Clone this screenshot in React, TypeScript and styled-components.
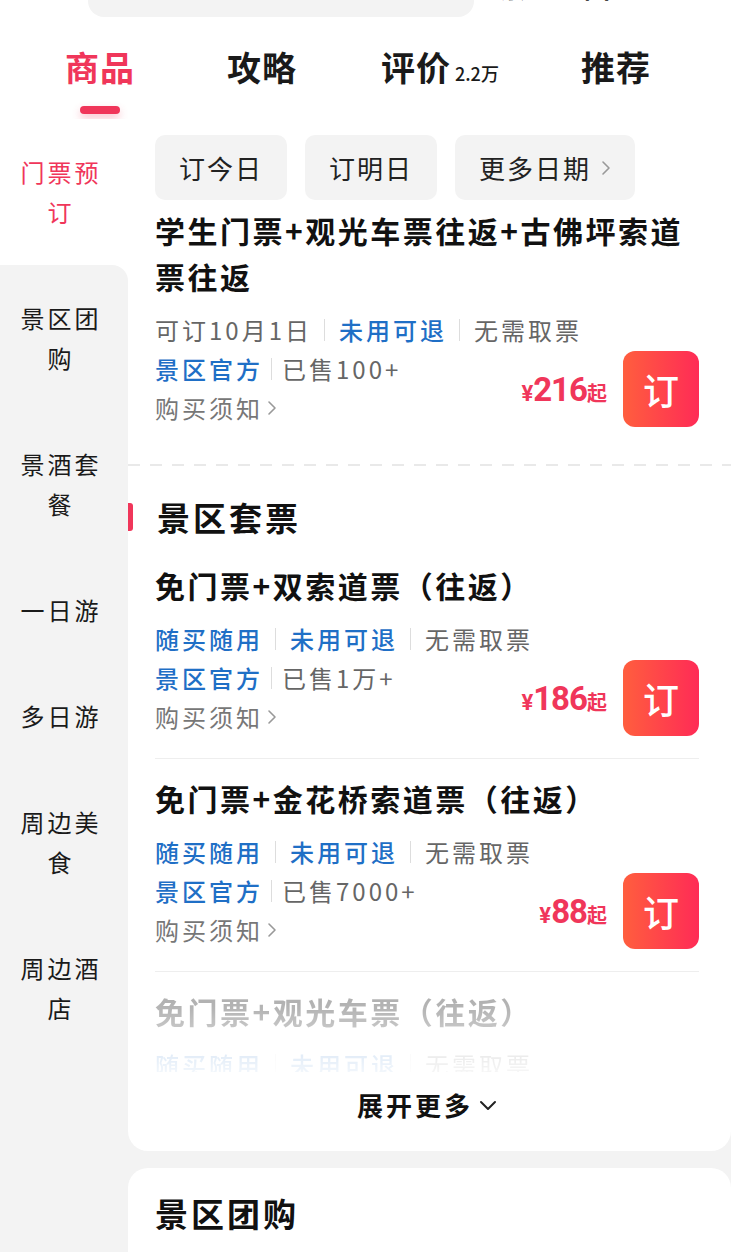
import { Fragment } from 'react';
import styled, { createGlobalStyle } from 'styled-components';

const PINK = '#f0365a';
const BLUE = '#1f6fc6';
const GREY_BG = '#f3f3f3';

const GlobalStyle = createGlobalStyle`
  body {
    margin: 0;
    background: #fff;
    font-family: "Noto Sans CJK SC", "Noto Sans", sans-serif;
    color: #111;
  }
`;

const Page = styled.div`
  width: 731px;
  overflow: hidden;
`;

const TopBar = styled.header`
  height: 119px;
  background: #fff;
`;

const SearchRow = styled.div`
  display: flex;
  align-items: flex-start;
  height: 17px;
  overflow: hidden;
  padding-left: 88px;
`;

const SearchBox = styled.div`
  width: 386px;
  height: 17px;
  border-radius: 0 0 16px 16px;
  background: ${GREY_BG};
`;

const HeadText = styled.span`
  margin: -27px 0 0 26px;
  font-size: 26px;
  line-height: 28px;
  letter-spacing: 2px;
  font-weight: 700;
`;

const Tabs = styled.nav`
  display: grid;
  grid-template-columns: 162px 154px 200px auto;
  justify-items: start;
  padding-left: 65px;
  margin-top: 26px;
`;

const Tab = styled.div<{ $active?: boolean }>`
  display: inline-flex;
  flex-direction: column;
  align-items: center;
  color: ${({ $active }) => ($active ? PINK : '#1a1a1a')};
`;

const TabLabel = styled.div`
  display: flex;
  align-items: baseline;
  font-size: 34px;
  line-height: 48px;
  font-weight: 700;
  letter-spacing: 1px;
`;

const TabCount = styled.span`
  margin-left: 4px;
  font-size: 18px;
  font-weight: 500;
  letter-spacing: 0;
`;

const Indicator = styled.span`
  width: 40px;
  height: 8px;
  margin-top: 15px;
  border-radius: 4px;
  background: ${PINK};
  box-shadow: 0 4px 8px rgba(240, 54, 90, 0.3);
`;

const Body = styled.div`
  display: grid;
  grid-template-columns: 128px minmax(0, 1fr);
  background: ${GREY_BG};
  min-height: 1200px;
`;

const Sidebar = styled.aside`
  display: flex;
  flex-direction: column;
  background: #fff;
`;

const SideItem = styled.div<{ $active?: boolean; $afterActive?: boolean }>`
  padding: 33px 24px 33px 18px;
  font-size: 24px;
  line-height: 40px;
  letter-spacing: 3px;
  text-align: center;
  color: ${({ $active }) => ($active ? PINK : '#1a1a1a')};
  background: ${({ $active }) => ($active ? '#fff' : GREY_BG)};
  border-top-right-radius: ${({ $afterActive }) => ($afterActive ? '16px' : '0')};
`;

const SideFill = styled.div`
  flex: 1;
  background: ${GREY_BG};
`;

const Main = styled.main`
  display: flex;
  flex-direction: column;
  gap: 17px;
  min-width: 0;
`;

const Card = styled.section<{ $top?: boolean }>`
  background: #fff;
  padding: ${({ $top }) => ($top ? '16px 32px 26px 27px' : '21px 32px 60px 27px')};
  border-radius: ${({ $top }) => ($top ? '0 0 20px 20px' : '20px 20px 0 0')};
`;

const Chips = styled.div`
  display: flex;
  gap: 18px;
`;

const Chip = styled.div`
  display: flex;
  align-items: center;
  height: 65px;
  padding: 0 24px;
  border-radius: 10px;
  background: ${GREY_BG};
  font-size: 26px;
  letter-spacing: 2px;
  color: #222;
`;

const ChipArrow = styled.span`
  display: flex;
  margin-left: 10px;
`;

const Product = styled.div<{ $first?: boolean }>`
  padding: ${({ $first }) => ($first ? '7px 0 37px' : '16px 0 22px')};
  border-bottom: ${({ $first }) => ($first ? 'none' : '1px solid #eee')};
`;

const Title = styled.h4`
  margin: 0;
  font-size: 30px;
  line-height: 46px;
  font-weight: 700;
  letter-spacing: 2.5px;
  color: #111;
`;

const Row = styled.div`
  display: flex;
  justify-content: space-between;
  align-items: flex-end;
  margin-top: 11px;
`;

const Meta = styled.div`
  display: flex;
  flex-direction: column;
  flex: 1;
  min-width: 0;
`;

const MetaLine = styled.div`
  display: flex;
  align-items: center;
  height: 39px;
  font-size: 24px;
  letter-spacing: 3px;
  white-space: nowrap;
`;

const Tag = styled.span<{ $blue?: boolean }>`
  color: ${({ $blue }) => ($blue ? BLUE : '#666')};
  font-weight: ${({ $blue }) => ($blue ? 500 : 400)};
`;

const Sep = styled.i<{ $tight?: boolean }>`
  flex-shrink: 0;
  width: 1px;
  height: 22px;
  background: #ddd;
  margin: ${({ $tight }) => ($tight ? '0 10px 0 8px' : '0 14px 0 12px')};
`;

const Notice = styled.span`
  display: flex;
  align-items: center;
  gap: 4px;
  color: #777;
`;

const Action = styled.div`
  display: flex;
  align-items: center;
  flex-shrink: 0;
  gap: 16px;
`;

const Price = styled.div`
  display: flex;
  align-items: baseline;
  color: ${PINK};
  font-weight: 700;
`;

const Yen = styled.span`
  font-family: Roboto, "Liberation Sans", sans-serif;
  font-size: 22px;
`;

const Amount = styled.span`
  font-family: Roboto, "Liberation Sans", sans-serif;
  font-size: 33px;
  letter-spacing: -1px;
`;

const Qi = styled.span`
  font-size: 20px;
`;

const OrderButton = styled.button`
  width: 76px;
  height: 76px;
  border: none;
  border-radius: 12px;
  background: linear-gradient(90deg, #ff5e3e, #ff2b56);
  color: #fff;
  font-family: "Noto Sans CJK SC", sans-serif;
  font-size: 36px;
  font-weight: 500;
  padding: 0;
`;

const Dashed = styled.div`
  height: 2px;
  margin: 0 -32px 0 -27px;
  background: repeating-linear-gradient(90deg, #e9e9e9 0 12px, transparent 12px 22px);
`;

const SectionTitle = styled.h3`
  display: flex;
  align-items: center;
  margin: 27px 0 5px;
  font-size: 33px;
  line-height: 48px;
  font-weight: 700;
  letter-spacing: 3px;
  color: #111;
`;

const SectionBar = styled.span`
  width: 5px;
  height: 28px;
  margin: 0 24px 0 -27px;
  border-radius: 0 3px 3px 0;
  background: ${PINK};
`;

const PlainTitle = styled.h3`
  margin: 0;
  font-size: 33px;
  line-height: 48px;
  font-weight: 700;
  letter-spacing: 3px;
  color: #111;
`;

const FadeWrap = styled.div`
  max-height: 100px;
  overflow: hidden;
  -webkit-mask-image: linear-gradient(to bottom, rgba(0, 0, 0, 0.38) 0, rgba(0, 0, 0, 0.3) 40px, rgba(0, 0, 0, 0.06) 100px);
  mask-image: linear-gradient(to bottom, rgba(0, 0, 0, 0.38) 0, rgba(0, 0, 0, 0.3) 40px, rgba(0, 0, 0, 0.06) 100px);
`;

const More = styled.div`
  display: flex;
  justify-content: center;
  align-items: center;
  gap: 6px;
  margin-top: 13px;
  font-size: 26px;
  line-height: 40px;
  font-weight: 700;
  letter-spacing: 3px;
  color: #111;
`;

function ChevronRight({ color = '#999' }: { color?: string }) {
  return (
    <svg width="10" height="16" viewBox="0 0 10 16" fill="none">
      <path d="M2 2l6 6-6 6" stroke={color} strokeWidth="1.6" strokeLinecap="round" strokeLinejoin="round" />
    </svg>
  );
}

function ChevronDown() {
  return (
    <svg width="18" height="12" viewBox="0 0 18 12" fill="none">
      <path d="M2 3l7 7 7-7" stroke="#222" strokeWidth="2" strokeLinecap="round" strokeLinejoin="round" />
    </svg>
  );
}

type TagData = { text: string; blue?: boolean };

type Item = {
  title: string;
  tags: TagData[];
  sold: string;
  price: string;
};

const packTags: TagData[] = [
  { text: '随买随用', blue: true },
  { text: '未用可退', blue: true },
  { text: '无需取票' },
];

const items: Item[] = [
  {
    title: '学生门票+观光车票往返+古佛坪索道票往返',
    tags: [{ text: '可订10月1日' }, { text: '未用可退', blue: true }, { text: '无需取票' }],
    sold: '已售100+',
    price: '216',
  },
  { title: '免门票+双索道票（往返）', tags: packTags, sold: '已售1万+', price: '186' },
  { title: '免门票+金花桥索道票（往返）', tags: packTags, sold: '已售7000+', price: '88' },
];

function TagLine({ tags }: { tags: TagData[] }) {
  return (
    <MetaLine>
      {tags.map((t, i) => (
        <Fragment key={t.text}>
          {i > 0 && <Sep />}
          <Tag $blue={t.blue}>{t.text}</Tag>
        </Fragment>
      ))}
    </MetaLine>
  );
}

function ProductBlock({ item, first }: { item: Item; first?: boolean }) {
  return (
    <Product $first={first}>
      <Title>{item.title}</Title>
      <Row>
        <Meta>
          <TagLine tags={item.tags} />
          <MetaLine>
            <Tag $blue>景区官方</Tag>
            <Sep $tight />
            <Tag>{item.sold}</Tag>
          </MetaLine>
          <MetaLine>
            <Notice>
              购买须知
              <ChevronRight />
            </Notice>
          </MetaLine>
        </Meta>
        <Action>
          <Price>
            <Yen>¥</Yen>
            <Amount>{item.price}</Amount>
            <Qi>起</Qi>
          </Price>
          <OrderButton>订</OrderButton>
        </Action>
      </Row>
    </Product>
  );
}

const sideItems = ['门票预订', '景区团购', '景酒套餐', '一日游', '多日游', '周边美食', '周边酒店'];

export default function App() {
  return (
    <Page>
      <GlobalStyle />
      <TopBar>
        <SearchRow>
          <SearchBox />
          <HeadText>景区地图</HeadText>
        </SearchRow>
        <Tabs>
          <Tab $active>
            <TabLabel>商品</TabLabel>
            <Indicator />
          </Tab>
          <Tab>
            <TabLabel>攻略</TabLabel>
          </Tab>
          <Tab>
            <TabLabel>
              评价<TabCount>2.2万</TabCount>
            </TabLabel>
          </Tab>
          <Tab>
            <TabLabel>推荐</TabLabel>
          </Tab>
        </Tabs>
      </TopBar>
      <Body>
        <Sidebar>
          {sideItems.map((s, i) => (
            <SideItem key={s} $active={i === 0} $afterActive={i === 1}>
              {s}
            </SideItem>
          ))}
          <SideFill />
        </Sidebar>
        <Main>
          <Card $top>
            <Chips>
              <Chip>订今日</Chip>
              <Chip>订明日</Chip>
              <Chip>
                更多日期
                <ChipArrow>
                  <ChevronRight />
                </ChipArrow>
              </Chip>
            </Chips>
            <ProductBlock item={items[0]} first />
            <Dashed />
            <SectionTitle>
              <SectionBar />
              景区套票
            </SectionTitle>
            {items.slice(1).map((it) => (
              <ProductBlock key={it.title} item={it} />
            ))}
            <FadeWrap>
              <Product>
                <Title>免门票+观光车票（往返）</Title>
                <Row>
                  <Meta>
                    <TagLine tags={packTags} />
                  </Meta>
                </Row>
              </Product>
            </FadeWrap>
            <More>
              展开更多
              <ChevronDown />
            </More>
          </Card>
          <Card>
            <PlainTitle>景区团购</PlainTitle>
          </Card>
        </Main>
      </Body>
    </Page>
  );
}
